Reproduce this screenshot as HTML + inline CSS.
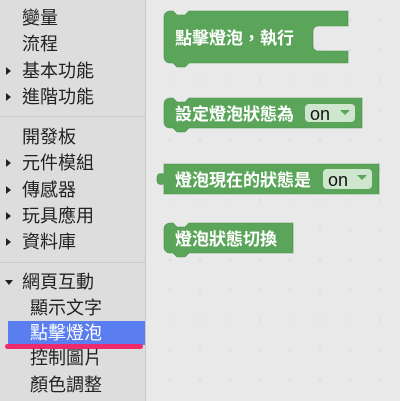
<!DOCTYPE html>
<html><head><meta charset="utf-8"><style>
body{margin:0;width:400px;height:401px;overflow:hidden;background:#e9e9e9;font-family:"Liberation Sans","Noto Sans CJK TC",sans-serif;position:relative}
#tb{position:absolute;left:0;top:0;width:145px;height:401px;background:#dddddd;border-right:1px solid #c8c8c8}
.it{position:absolute;left:22px;font-size:18px;color:#222;line-height:24px}
.sub{left:30px}
.tri{position:absolute;left:6px;width:0;height:0;border-top:4px solid transparent;border-bottom:4px solid transparent;border-left:5px solid #222}
.sep{position:absolute;left:0;width:145px;height:1px;background:#c9c9c9}
#sel{position:absolute;left:8px;top:321px;width:137px;height:24px;background:#5a7df0}
#pink{position:absolute;left:5px;top:344px;width:138px;height:5px;border-radius:3px;background:#ee2a6a}
svg{position:absolute;left:0;top:0}
</style></head><body>
<svg width="400" height="401">
<defs><pattern id="d" width="30" height="30" patternUnits="userSpaceOnUse" x="5" y="5"><circle cx="15" cy="15" r="0.9" fill="#d2d2d2"/></pattern></defs>
<rect x="146" y="0" width="254" height="401" fill="url(#d)"/>
<g fill="#5aa55a" stroke="#4a914a" stroke-width="0.6">
<path d="M164 17 a6 6 0 0 1 6 -6 h3 l4 4 h8 l4 -4 h159 v15 h-30 a5 5 0 0 0 -5 5 v15 a5 5 0 0 0 5 5 h30 v12 h-159 l-4 4 h-8 l-4 -4 h-3 a6 6 0 0 1 -6 -6z"/>
<path d="M164 104 a6 6 0 0 1 6 -6 h3 l4 4 h8 l4 -4 h173 v30 h-173 l-4 4 h-8 l-4 -4 h-3 a6 6 0 0 1 -6 -6z"/>
<path d="M164 164 h215 v30 h-215 v-10 q-7 2 -7 -4 v-2 q0 -6 7 -4z"/>
<path d="M164 229 a6 6 0 0 1 6 -6 h3 l4 4 h8 l4 -4 h104 v30 h-104 l-4 4 h-8 l-4 -4 h-3 a6 6 0 0 1 -6 -6z"/>
</g>
<g font-size="17" font-weight="bold" fill="#fff" font-family="Liberation Sans,Noto Sans CJK TC,sans-serif">
<text x="175" y="44">點擊燈泡，執行</text>
<text x="175" y="120">設定燈泡狀態為</text>
<text x="175" y="186">燈泡現在的狀態是</text>
<text x="175" y="245">燈泡狀態切換</text>
</g>
<rect x="305" y="104" width="50" height="18" rx="4" fill="#cde6cd"/>
<rect x="323" y="169" width="49" height="20" rx="4" fill="#cde6cd"/>
<g font-size="18" fill="#111"><text x="310" y="120">on</text><text x="328" y="186">on</text></g>
<path d="M340 110 h10 l-5 5z M357 175 h10 l-5 5z" fill="#5aa55a"/>
</svg>
<div id="tb">
<div id="sel"></div><div id="pink"></div>
<div class="it" style="top:6px">變量</div>
<div class="it" style="top:32px">流程</div>
<div class="tri" style="top:67px"></div><div class="it" style="top:59px">基本功能</div>
<div class="tri" style="top:93px"></div><div class="it" style="top:85px">進階功能</div>
<div class="sep" style="top:116px"></div>
<div class="it" style="top:125px">開發板</div>
<div class="tri" style="top:159px"></div><div class="it" style="top:151px">元件模組</div>
<div class="tri" style="top:186px"></div><div class="it" style="top:178px">傳感器</div>
<div class="tri" style="top:212px"></div><div class="it" style="top:204px">玩具應用</div>
<div class="tri" style="top:238px"></div><div class="it" style="top:230px">資料庫</div>
<div class="sep" style="top:262px"></div>
<div style="position:absolute;left:5px;top:280px;border-left:4px solid transparent;border-right:4px solid transparent;border-top:5px solid #222"></div>
<div class="it" style="top:270px">網頁互動</div>
<div class="it sub" style="top:296px">顯示文字</div>
<div class="it sub" style="top:321px;color:#fff">點擊燈泡</div>
<div class="it sub" style="top:346px">控制圖片</div>
<div class="it sub" style="top:373px">顏色調整</div>
</div>
</body></html>
